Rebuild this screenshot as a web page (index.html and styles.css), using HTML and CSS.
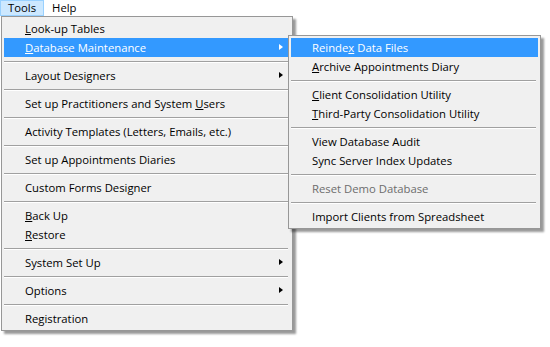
FILE: index.html
```html
<!DOCTYPE html>
<html>
<head>
<meta charset="utf-8">
<link rel="stylesheet" href="styles.css">
</head>
<body>
<div class="menubar">
  <span class="mb-item active">Tools</span>
  <span class="mb-item">Help</span>
</div>

<div class="menu main-menu">
  <div class="item"><span class="ak">L</span>ook-up Tables</div>
  <div class="item hot has-sub"><span class="ak">D</span>atabase Maintenance<i class="arrow"></i></div>
  <div class="sep"></div>
  <div class="item has-sub">Layout Designers<i class="arrow"></i></div>
  <div class="sep"></div>
  <div class="item">Set up Practitioners and System <span class="ak">U</span>sers</div>
  <div class="sep"></div>
  <div class="item">Activity Templates (Letters, Emails, etc.)</div>
  <div class="sep"></div>
  <div class="item">Set up Appointments Diaries</div>
  <div class="sep"></div>
  <div class="item">Custom Forms Designer</div>
  <div class="sep"></div>
  <div class="item"><span class="ak">B</span>ack Up</div>
  <div class="item"><span class="ak">R</span>estore</div>
  <div class="sep"></div>
  <div class="item has-sub">System Set Up<i class="arrow"></i></div>
  <div class="sep"></div>
  <div class="item has-sub">Options<i class="arrow"></i></div>
  <div class="sep"></div>
  <div class="item">Registration</div>
</div>

<div class="menu sub-menu">
  <div class="item hot">Reinde<span class="ak">x</span> Data Files</div>
  <div class="item"><span class="ak">A</span>rchive Appointments Diary</div>
  <div class="sep"></div>
  <div class="item"><span class="ak">C</span>lient Consolidation Utility</div>
  <div class="item"><span class="ak">T</span>hird-Party Consolidation Utility</div>
  <div class="sep"></div>
  <div class="item">View Database Audit</div>
  <div class="item">Sync Server Index Updates</div>
  <div class="sep"></div>
  <div class="item disabled">Reset Demo Database</div>
  <div class="sep"></div>
  <div class="item">Import Clients from Spreadsheet</div>
</div>
</body>
</html>
```
FILE: styles.css
```css
html, body {
  margin: 0;
  padding: 0;
  background: #ffffff;
}
body {
  font-family: "Open Sans", "Noto Sans", "Liberation Sans", sans-serif;
  font-size: 11.3px;
  color: #000000;
  width: 550px;
  height: 347px;
  overflow: hidden;
  position: relative;
}
.menubar {
  display: flex;
  height: 16px;
  background: #ffffff;
}
.mb-item {
  box-sizing: border-box;
  height: 16px;
  line-height: 14px;
  padding: 0 7px;
  border: 1px solid transparent;
}
.mb-item.active {
  background: #cce8ff;
  border-color: #99d1ff;
}
.menu {
  position: absolute;
  box-sizing: border-box;
  background: #f0f0f0;
  border: 1px solid #979797;
  padding: 2px;
  box-shadow: 3px 3px 2px rgba(0, 0, 0, 0.4);
}
.main-menu {
  left: 1px;
  top: 16px;
  width: 292px;
}
.sub-menu {
  left: 288px;
  top: 35px;
  width: 253px;
}
.item {
  position: relative;
  height: 19px;
  line-height: 19px;
  padding-left: 21px;
  white-space: nowrap;
}
.item.hot {
  background: #3399ff;
  color: #ffffff;
}
.item.disabled {
  color: #6d6d6d;
}
.ak {
  text-decoration: underline;
  text-underline-offset: 1px;
}
.sep {
  height: 9px;
  display: flex;
  flex-direction: column;
  justify-content: center;
  padding: 0 2px 0 0;
}
.sep::before {
  content: "";
  display: block;
  height: 0;
  border-top: 1px solid #a0a0a0;
  border-bottom: 1px solid #ffffff;
}
.arrow {
  position: absolute;
  right: 7px;
  top: 6px;
  width: 0;
  height: 0;
  border-top: 3.5px solid transparent;
  border-bottom: 3.5px solid transparent;
  border-left: 4px solid #000000;
}
.item.hot .arrow {
  border-left-color: #ffffff;
}
```
